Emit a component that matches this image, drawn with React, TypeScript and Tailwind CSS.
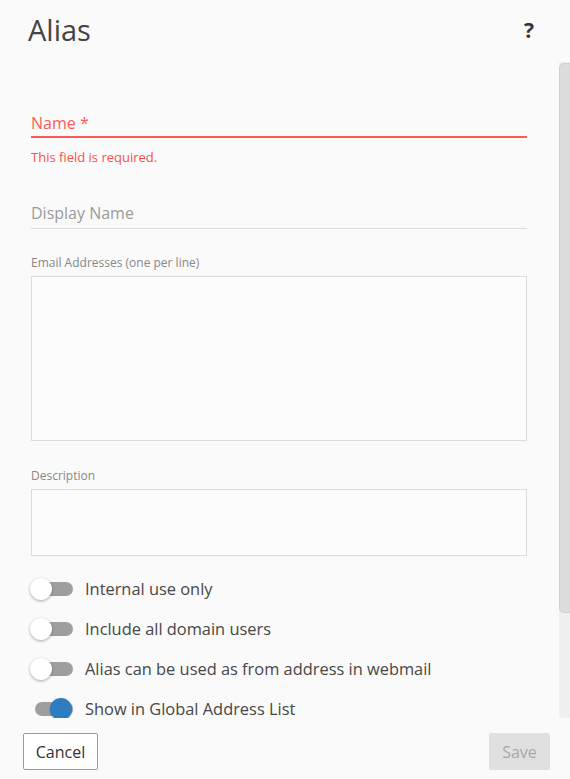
import React from "react";

type ToggleProps = { on?: boolean; label: string };

function Toggle({ on = false, label }: ToggleProps) {
  return (
    <div className="flex h-[40px] items-center">
      <div className="relative h-[24px] w-[46px] shrink-0">
        <div className="absolute left-[4px] top-[5px] h-[14px] w-[38px] rounded-full bg-[#9e9e9e]" />
        {on ? (
          <div className="absolute left-[19px] top-[1px] h-[22px] w-[22px] rounded-full bg-[#2d7dc0] shadow-[0_1px_2px_rgba(0,0,0,0.35)]" />
        ) : (
          <div className="absolute left-[-1px] top-[1px] h-[22px] w-[22px] rounded-full bg-white shadow-[0_1px_3px_rgba(0,0,0,0.35)]" />
        )}
      </div>
      <span className="ml-[8px] text-[16.4px] leading-[16px] text-[#474747]">{label}</span>
    </div>
  );
}

export default function App() {
  return (
    <div
      className="flex h-[779px] w-[570px] flex-col overflow-hidden bg-[#fafafa]"
      style={{ fontFamily: '"Open Sans", "Noto Sans", sans-serif' }}
    >
      {/* header */}
      <div className="flex h-[62px] shrink-0 items-start justify-between pl-[28px] pr-[36px] pt-[10px]">
        <h1 className="text-[29px] leading-[40px] font-normal text-[#444]">Alias</h1>
        <span className="mt-[6px] text-[21px] leading-[28px] font-bold text-[#333]">?</span>
      </div>

      {/* scrolling body */}
      <div className="flex min-h-0 flex-1">
        <div className="min-w-0 flex-1 overflow-hidden pl-[31px] pr-[32px] pt-[44px]">
          {/* Name */}
          <div className="flex h-[32px] items-end border-b-2 border-[#ff5a5a] pb-[1px]">
            <span className="text-[16px] leading-6 text-[#ff5a5a]">Name *</span>
          </div>
          <div className="mt-[10px] text-[13px] leading-[18px] text-[#ff4f4f]">This field is required.</div>

          {/* Display Name */}
          <div className="mt-[31px] flex h-[32px] items-end border-b border-[#dcdcdc] pb-[3px]">
            <span className="text-[16px] leading-6 text-[#9a9a9a]">Display Name</span>
          </div>

          {/* Email addresses */}
          <div className="mt-[25px] text-[12px] leading-[18px] text-[#888]">Email Addresses (one per line)</div>
          <div className="mt-[4px] h-[165px] border border-[#dcdcdc] bg-[#fcfcfc]" />

          {/* Description */}
          <div className="mt-[26px] text-[12px] leading-[18px] text-[#888]">Description</div>
          <div className="mt-[4px] h-[67px] border border-[#dcdcdc] bg-[#fcfcfc]" />

          {/* switches */}
          <div className="mt-[13px] flex flex-col">
            <Toggle label="Internal use only" />
            <Toggle label="Include all domain users" />
            <Toggle label="Alias can be used as from address in webmail" />
            <Toggle on label="Show in Global Address List" />
          </div>
        </div>

        {/* scrollbar */}
        <div className="flex w-[11px] shrink-0 flex-col bg-[#f0f0f0]">
          <div className="mt-[1px] h-[550px] rounded-tl-[5px] rounded-bl-[5px] border border-r-0 border-[#cfcfcf] bg-[#dcdcdc]" />
        </div>
      </div>

      {/* footer */}
      <div className="flex h-[61px] shrink-0 items-start justify-between pl-[23px] pr-[20px] pt-[15px]">
        <button className="h-[37px] w-[75px] rounded-[2px] border border-[#9a9a9a] bg-white text-[16px] text-[#333]">
          Cancel
        </button>
        <button className="h-[37px] w-[61px] rounded-[2px] bg-[#e0e0e0] text-[16px] text-[#a8a8a8]">Save</button>
      </div>
    </div>
  );
}
